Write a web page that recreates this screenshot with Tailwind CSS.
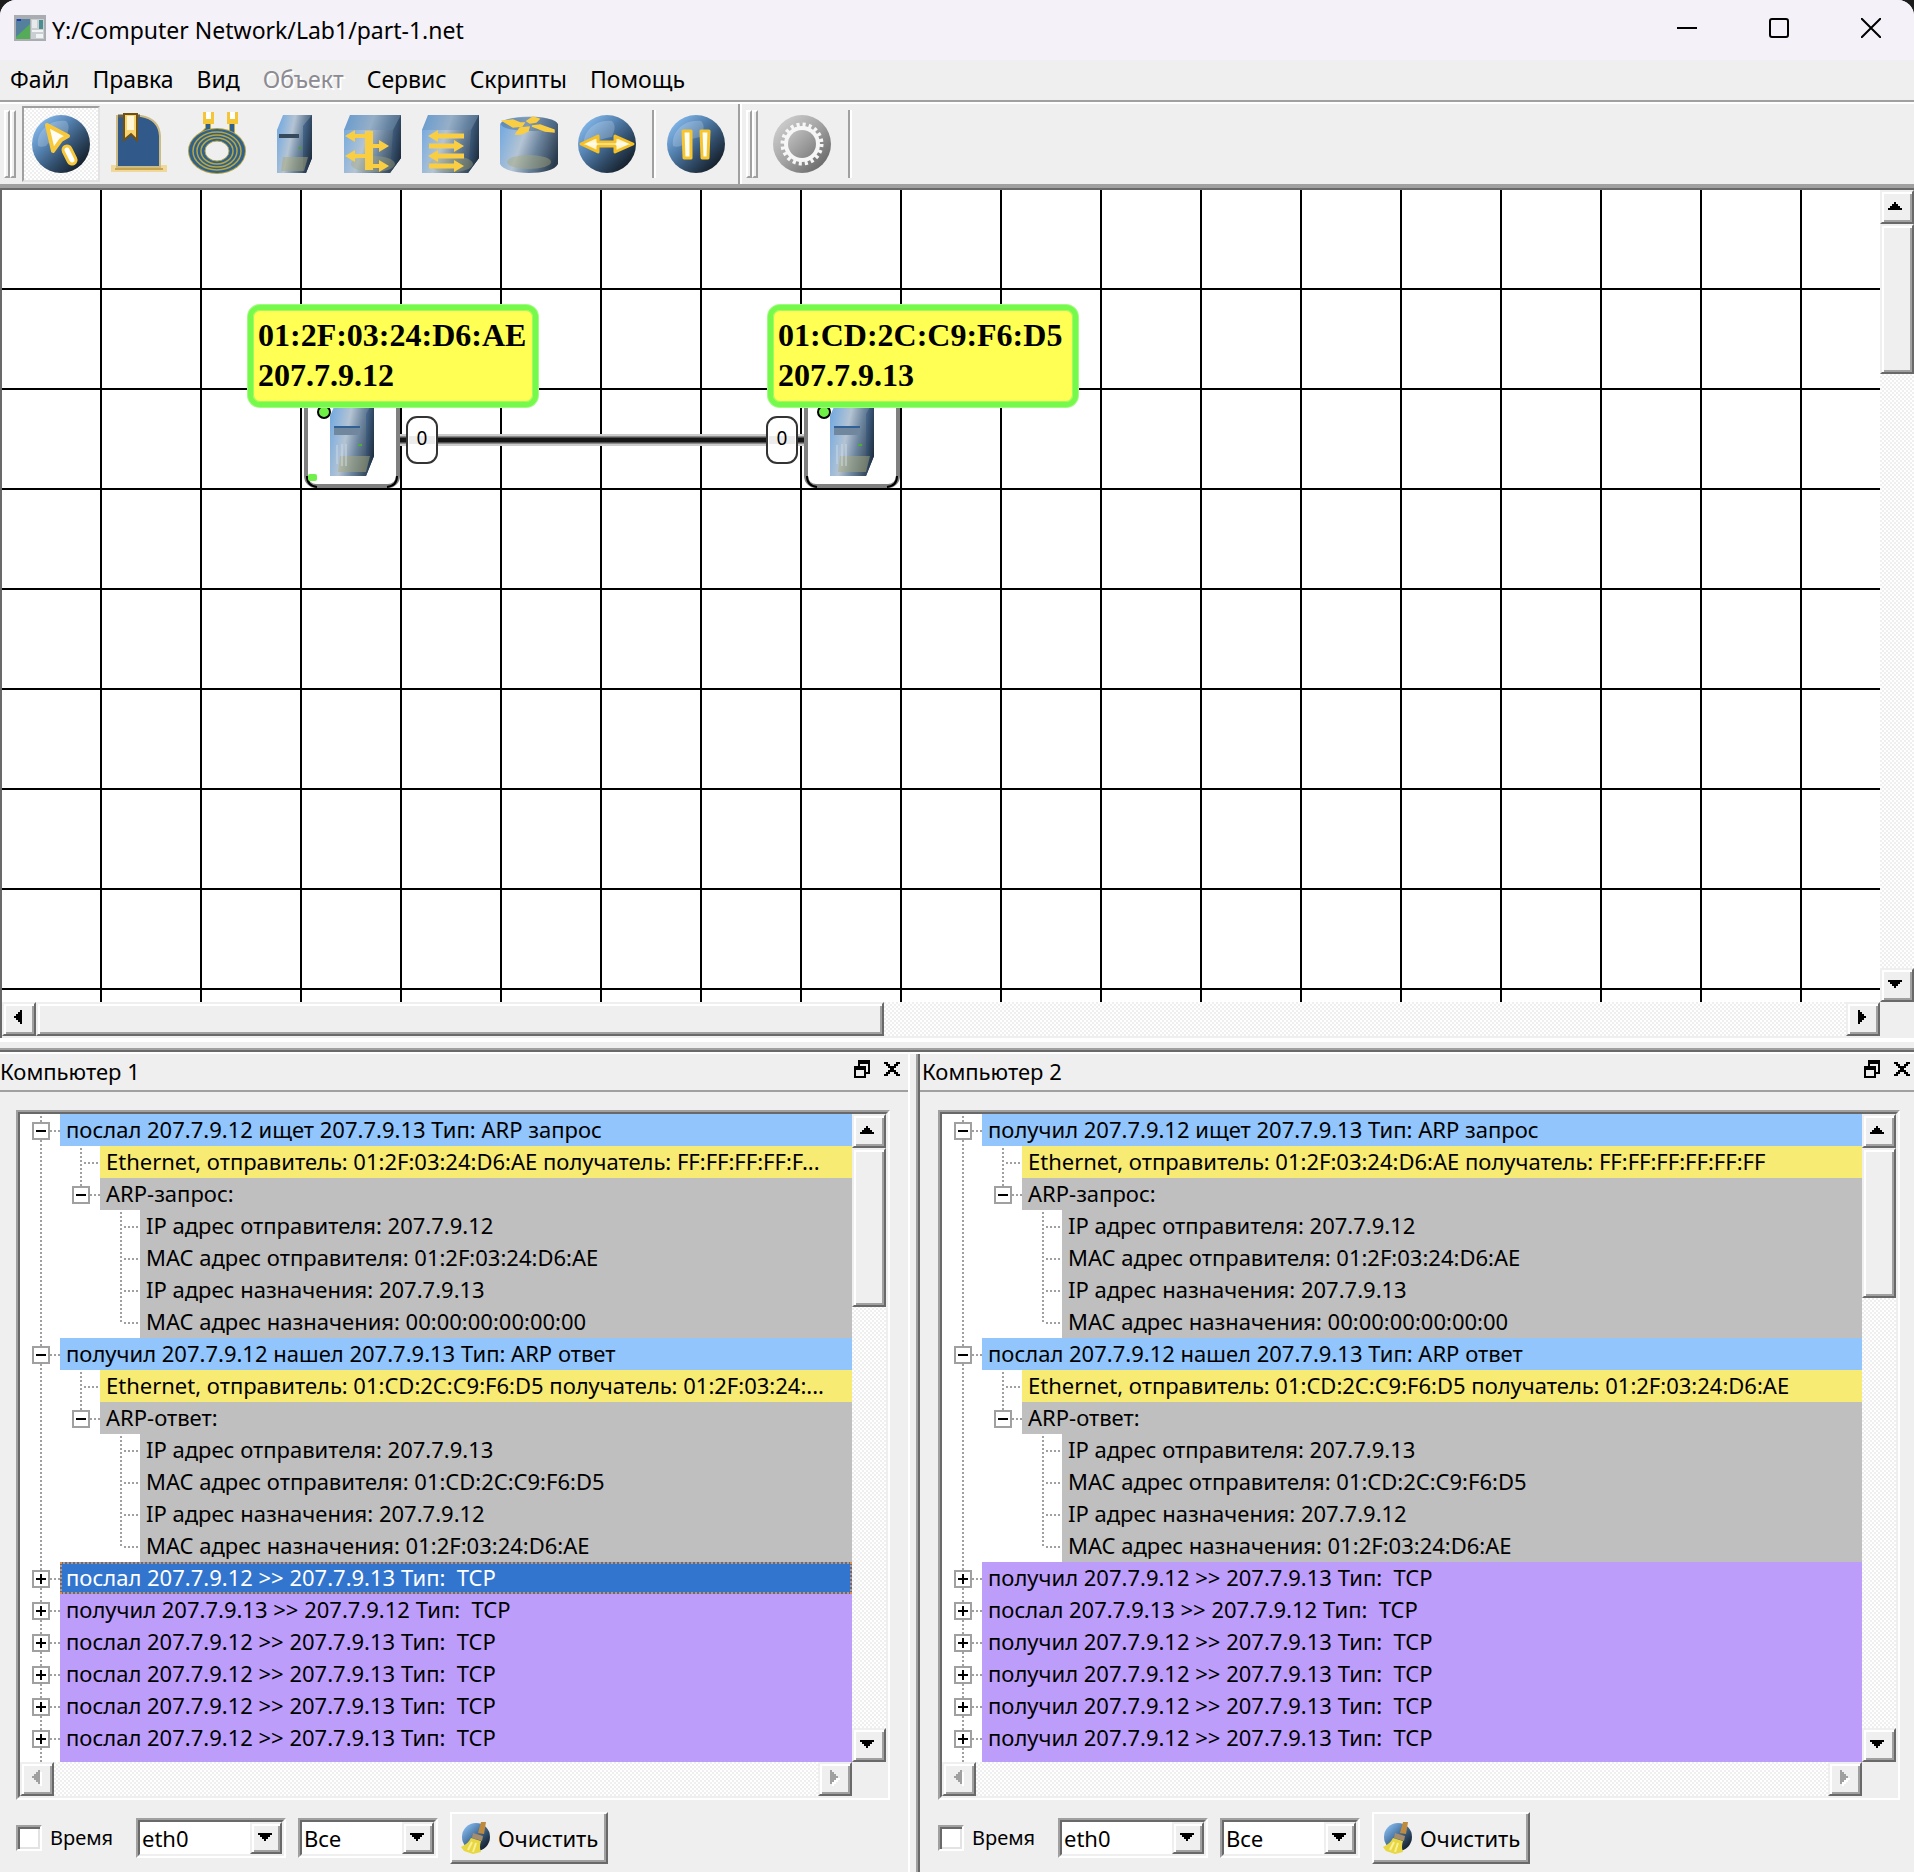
<!DOCTYPE html>
<html lang="ru">
<head>
<meta charset="utf-8">
<title>Y:/Computer Network/Lab1/part-1.net</title>
<script src="https://cdn.jsdelivr.net/npm/@tailwindcss/browser@4"></script>
</head>
<body class="bg-[#1c1c1c] font-['Noto_Sans','Open_Sans',sans-serif] text-[22px] leading-8 text-black">

<svg class="absolute size-0" aria-hidden="true">
  <defs>
    <linearGradient id="ball" x1="0.1" y1="0.1" x2="0.88" y2="0.88">
      <stop offset="0" stop-color="#86bbee"/><stop offset="0.35" stop-color="#5583b2"/><stop offset="0.65" stop-color="#33506e"/><stop offset="1" stop-color="#131c26"/>
    </linearGradient>
    <linearGradient id="grayball" x1="0.1" y1="0.1" x2="0.9" y2="0.9">
      <stop offset="0" stop-color="#cfcfcf"/><stop offset="0.5" stop-color="#a2a2a2"/><stop offset="1" stop-color="#666"/>
    </linearGradient>
    <linearGradient id="graycore" x1="0" y1="0" x2="1" y2="1">
      <stop offset="0" stop-color="#c4c4c4"/><stop offset="1" stop-color="#7d7d7d"/>
    </linearGradient>
    <linearGradient id="body" x1="0" y1="0.3" x2="1" y2="0.65">
      <stop offset="0" stop-color="#78abdf"/><stop offset="0.38" stop-color="#b4c4d4"/><stop offset="0.65" stop-color="#6b849d"/><stop offset="1" stop-color="#2a3b4e"/>
    </linearGradient>
    <linearGradient id="side" x1="0" y1="0" x2="1" y2="1">
      <stop offset="0" stop-color="#4d729c"/><stop offset="1" stop-color="#17222e"/>
    </linearGradient>
    <linearGradient id="gold" x1="0" y1="0" x2="0" y2="1">
      <stop offset="0" stop-color="#ffe9a0"/><stop offset="0.5" stop-color="#fffbe8"/><stop offset="1" stop-color="#ffe9a0"/>
    </linearGradient>
    <symbol id="sphere" viewBox="0 0 64 64">
      <circle cx="32" cy="32" r="29" fill="url(#ball)"/>
      <path d="M9 34C7 20 20 7 37 9c4 4 3 9 0 16-9 1-17 4-20 9-3 1-6 1-8 0z" fill="#fff" opacity=".2"/>
    </symbol>
    <symbol id="cube" viewBox="0 0 64 64">
      <path d="M3 18 9 3h51v43L49 61H3z" fill="url(#body)"/>
      <path d="M3 18 9 3h51L52 18z" fill="#5f87b0" opacity=".35"/>
      <path d="M52 18 60 3v43L49 61z" fill="url(#side)"/>
      <ellipse cx="32" cy="52" rx="22" ry="8" fill="#a8a878" opacity=".4"/>
    </symbol>
    <symbol id="tower" viewBox="0 0 44 76">
      <path d="M0 16 7 0h37v56l-8 20H0z" fill="url(#body)"/>
      <path d="M36 14 44 0v56l-8 20z" fill="url(#side)"/>
      <path d="M10 56h30l-4 16H8z" fill="#a8a878" opacity=".5"/>
      <path d="M4 27h26v8H4z" fill="#71879d"/><path d="M4 26h26v2H4z" fill="#2f6096"/>
      <path d="M7 45v19M12 44v22M16 44v22" stroke="#cbd8e6" stroke-width="1"/>
      <path d="M28 44h4v2h-4z" fill="#4fae35"/>
    </symbol>
    <g id="host">
      <rect x="2" y="2" width="92" height="92" rx="10" fill="#fff" stroke="#808080" stroke-width="4"/>
      <path d="M3 84q0 10 10 11M93 84q0 10-10 11" fill="none" stroke="#000" stroke-width="2"/>
      <circle cx="20" cy="20" r="6" fill="#6fef45" stroke="#000" stroke-width="2"/>
      <use href="#tower" x="26" y="8" width="44" height="76"/>
    </g>
  </defs>
</svg>

<div class="flex h-screen flex-col overflow-hidden rounded-t-2xl bg-[#efefef]">

  <header class="flex h-[60px] shrink-0 items-center bg-[#f4f1f8] pl-3.5 pb-1">
    <svg class="h-[26px] w-8" viewBox="0 0 32 26" aria-hidden="true">
      <rect width="32" height="26" fill="#a9adb2"/><path d="M2 4h14v20H2z" fill="#4b86a0"/><path d="M2 4h14v8L2 20z" fill="#54809e"/><path d="M2 22 16 9v15H2z" fill="#55ab58"/><path d="M3 4h4v2H3z" fill="#1c3cb4"/>
      <path d="M17 4h13v20H17z" fill="#c9ced3"/><path d="M18 5h5v8h-5z" fill="#e7eaec"/><path d="M25 5h4v9h-4z" fill="#4c8d8f"/><path d="M18 15h11v2H18zM22 19h7v4h-7z" fill="#f1f3f3"/>
    </svg>
    <h1 class="ml-1.5 flex-1 pt-1 text-[23px]">Y:/Computer Network/Lab1/part-1.net</h1>
    <div class="-mr-[3px] flex">
      <button class="flex h-12 w-[92px] items-center justify-center" aria-label="Свернуть"><svg width="20" height="20"><path d="M0 10h20" stroke="#000" stroke-width="2"/></svg></button>
      <button class="flex h-12 w-[92px] items-center justify-center" aria-label="Развернуть"><svg width="20" height="20"><rect x="1" y="1" width="18" height="18" rx="2" fill="none" stroke="#000" stroke-width="2"/></svg></button>
      <button class="flex h-12 w-[92px] items-center justify-center" aria-label="Закрыть"><svg width="20" height="20"><path d="M0 0 20 20M20 0 0 20" stroke="#000" stroke-width="2"/></svg></button>
    </div>
  </header>

  <nav class="flex h-10 shrink-0 items-center gap-[23px] pb-0.5 pl-2.5 text-[23px]">
    <button>Файл</button><button>Правка</button><button>Вид</button><button disabled class="text-[#8c8a92] [text-shadow:2px_2px_#fff]">Объект</button><button>Сервис</button><button>Скрипты</button><button>Помощь</button>
  </nav>

  <div class="flex h-[90px] shrink-0 border-t-2 border-b-2 border-t-[#a0a0a0] border-b-[#696969]">
    <div class="flex flex-1 border-t-2 border-b-4 border-t-white border-b-[#a0a0a0]" role="toolbar">
      <div class="flex items-center border-r-2 border-[#a0a0a0] pl-1 pr-[3px]">
        <div class="mr-1.5 flex h-[68px] w-3"><i class="w-1.5 border-2 border-white border-r-[#a0a0a0] border-b-[#a0a0a0]"></i><i class="w-1.5 border-2 border-white border-r-[#a0a0a0] border-b-[#a0a0a0]"></i></div>
        <button aria-label="Выделение" class="flex h-[76px] w-[78px] items-center justify-center border-2 border-t-[#a0a0a0] border-l-[#a0a0a0] border-r-[#e3e3e3] border-b-[#e3e3e3] bg-[repeating-conic-gradient(#efefef_0_25%,#fff_0_50%)] bg-[length:4px_4px]">
          <svg class="size-16" viewBox="0 0 64 64"><use href="#sphere"/><path d="m38 38 5 10" stroke="#f7c83c" stroke-width="11" stroke-linecap="round"/><path d="M18 13 39 24 32 28 24 39z" fill="#fffdf2" stroke="#f7c83c" stroke-width="4" stroke-linejoin="round"/><path d="m38 38 5 10" stroke="#fff" stroke-width="5" stroke-linecap="round"/></svg>
        </button>
        <button aria-label="Надпись" class="flex h-[76px] w-[78px] items-center justify-center">
          <svg class="size-16" viewBox="0 0 64 64"><path d="M4 53h56v7H4z" fill="#f0d79a"/><path d="M8 56h48v2H8z" fill="#c7a550"/><path d="M10 4h24q18 3 19 20v31H10z" fill="#31598a" stroke="#cdbb84" stroke-width="2"/><path d="M11 4h22" stroke="#6b604a" stroke-width="3"/><path d="M17 2h13v26l-6-6-7 6z" fill="#f7d470" stroke="#6e5215" stroke-width="2"/><path d="M20 4h7v14h-7z" fill="#fff6d6"/></svg>
        </button>
        <button aria-label="Кабель" class="flex h-[76px] w-[78px] items-center justify-center">
          <svg class="size-16" viewBox="0 0 64 64"><path d="M23 12v5L9 31M47 12v14" fill="none" stroke="#c6ac3e" stroke-width="6"/><path d="M23 12v5L9 31M47 12v14" fill="none" stroke="#2f618f" stroke-width="4"/>
            <g fill="#b3a03c"><ellipse cx="32" cy="39" rx="29" ry="23"/></g><ellipse cx="32" cy="39" rx="28" ry="22" fill="#2f618f"/>
            <g fill="none" stroke="#b9a63f" stroke-width="1.500"><ellipse cx="32" cy="39" rx="24" ry="19"/><ellipse cx="32" cy="39" rx="20" ry="16"/><ellipse cx="32" cy="39" rx="16" ry="13"/></g>
            <ellipse cx="32" cy="39" rx="12" ry="10" fill="#efefef" stroke="#b9a63f" stroke-width="1"/>
            <path d="M18 0h11v12H18zM42 0h11v12H42z" fill="#f4c637"/><path d="M21 0h5v7h-5zM45 0h5v7h-5z" fill="#fff"/></svg>
        </button>
        <button aria-label="Компьютер" class="flex h-[76px] w-[78px] items-center justify-center">
          <svg class="size-16" viewBox="0 0 64 64"><path d="M14 18 20 3h29v43l-6 15H14z" fill="url(#body)"/><path d="M40 14 49 3v43l-6 15h-3z" fill="url(#side)"/><path d="M20 45h25l-4 14H18z" fill="#a8a878" opacity=".5"/><path d="M16 22h20v4H16z" fill="#37495c"/><circle cx="37" cy="36" r="1.500" fill="#4d9b3a"/></svg>
        </button>
        <button aria-label="Коммутатор" class="flex h-[76px] w-[78px] items-center justify-center">
          <svg class="size-16" viewBox="0 0 64 64"><use href="#cube"/><path d="M12 24h18M12 44h18M27 34h14M27 54h14" stroke="#f9ce43" stroke-width="4"/><path d="M28 19v39" stroke="#f9ce43" stroke-width="8"/><path d="M14 18v12L4 24zM14 38v12L4 44zM38 28v12l10-6zM38 48v12l10-6z" fill="#f9ce43"/></svg>
        </button>
        <button aria-label="Концентратор" class="flex h-[76px] w-[78px] items-center justify-center">
          <svg class="size-16" viewBox="0 0 64 64"><use href="#cube"/><path d="M16 24h29M10 34h26M16 44h29M10 54h26" stroke="#f9ce43" stroke-width="5"/><path d="M19 18v12L9 24zM35 28v12l10-6zM19 38v12L9 44zM35 48v12l10-6z" fill="#f9ce43"/></svg>
        </button>
        <button aria-label="Маршрутизатор" class="flex h-[76px] w-[78px] items-center justify-center">
          <svg class="size-16" viewBox="0 0 64 64"><path d="M3 12C8 2 56 2 61 12v40C56 64 8 64 3 52z" fill="url(#body)"/><ellipse cx="32" cy="12" rx="28" ry="7" fill="#44688f" opacity=".45"/><ellipse cx="32" cy="50" rx="22" ry="7" fill="#a8a878" opacity=".45"/><path d="m6 9 10-1 7 3h4l-2 3-9 1zM30 9l6-4 6 2-3 3-6 1zM35 14l8-1 14 5v2l-9-1zM19 22l4-6 9-1-1 4-7 3z" fill="#f9ce43" stroke="#f9ce43" stroke-width="1.500"/></svg>
        </button>
        <button aria-label="Общая шина" class="flex h-[76px] w-[78px] items-center justify-center">
          <svg class="size-16" viewBox="0 0 64 64"><use href="#sphere"/><path d="M6 32 23 24v6h17v-6l18 8-18 8v-6H23v6z" fill="url(#gold)" stroke="#f5c126" stroke-width="3" stroke-linejoin="round"/></svg>
        </button>
        <i class="ml-1.5 mr-px h-[68px] w-1 border-l-2 border-r-2 border-l-[#a0a0a0] border-r-white"></i>
        <button aria-label="Пауза" class="flex h-[76px] w-[78px] items-center justify-center">
          <svg class="size-16" viewBox="0 0 64 64"><use href="#sphere"/><path d="M19 19h8v27h-7zM37 19h8l-1 27h-6z" fill="#fffdf0" stroke="#f6c530" stroke-width="3" stroke-linejoin="round"/></svg>
        </button>
      </div>
      <div class="flex items-center border-l-2 border-white pl-1">
        <div class="mr-[5px] flex h-[68px] w-3"><i class="w-1.5 border-2 border-white border-r-[#a0a0a0] border-b-[#a0a0a0]"></i><i class="w-1.5 border-2 border-white border-r-[#a0a0a0] border-b-[#a0a0a0]"></i></div>
        <button aria-label="Настройки" disabled class="flex h-[76px] w-[78px] items-center justify-center">
          <svg class="size-16" viewBox="0 0 64 64"><circle cx="32" cy="32" r="29" fill="url(#grayball)"/><circle cx="32" cy="32" r="15.500" fill="none" stroke="#f6f6f6" stroke-width="5"/><circle cx="32" cy="32" r="19" fill="none" stroke="#f6f6f6" stroke-width="5" stroke-dasharray="3 2.970"/><circle cx="32" cy="32" r="14" fill="url(#graycore)"/></svg>
        </button>
        <i class="ml-[7px] h-[68px] w-1 border-l-2 border-r-2 border-l-[#a0a0a0] border-r-white"></i>
      </div>
    </div>
  </div>

  <main class="grid min-h-0 flex-[846] grid-cols-[1fr_34px] grid-rows-[1fr_34px] border-l-2 border-l-[#696969] pb-0.5">
    <div class="relative overflow-hidden bg-white bg-[linear-gradient(to_right,transparent_98px,#000_98px),linear-gradient(transparent_98px,#000_98px)] bg-[length:100px_100px]">
      <svg class="absolute inset-0 h-full w-full" aria-hidden="true">
        <path d="M398 250h408" stroke="#cbcbcb" stroke-width="12"/><path d="M398 250h408" stroke="#8a8a8a" stroke-width="8"/><path d="M398 250h408" stroke="#161616" stroke-width="5"/>
        <use href="#host" x="302" y="202"/><use href="#host" x="802" y="202"/>
        <rect x="306" y="284" width="9" height="7" rx="2" fill="#6ff04a"/>
        <rect x="405" y="227" width="30" height="46" rx="10" fill="#fff" stroke="#333" stroke-width="2"/>
        <rect x="765" y="227" width="30" height="46" rx="10" fill="#fff" stroke="#333" stroke-width="2"/>
        <path d="M407 246h26v8h-26zM767 246h26v8h-26z" fill="#ececec"/>
        <g font-size="19" text-anchor="middle"><text x="420" y="255">0</text><text x="780" y="255">0</text></g>
      </svg>
      <div class="absolute left-[246px] top-[115px] h-[102px] w-[290px] whitespace-nowrap rounded-xl border-[5px] border-[#75fa4b] bg-[#ffff54] p-[5px] font-['Liberation_Serif',serif] text-[32px] font-bold leading-10 shadow-[0_0_0_1px_#a0fb80,inset_0_0_0_1px_#a0fb60]">01:2F:03:24:D6:AE<br>207.7.9.12</div>
      <div class="absolute left-[766px] top-[115px] h-[102px] w-[310px] whitespace-nowrap rounded-xl border-[5px] border-[#75fa4b] bg-[#ffff54] p-[5px] font-['Liberation_Serif',serif] text-[32px] font-bold leading-10 shadow-[0_0_0_1px_#a0fb80,inset_0_0_0_1px_#a0fb60]">01:CD:2C:C9:F6:D5<br>207.7.9.13</div>
    </div>
    <div data-bar="v" data-size="150"></div>
    <div data-bar="h" data-size="848"></div>
    <div></div>
  </main>

  <div class="h-4 shrink-0 border-t-4 border-b-2 border-white"><div class="h-full border-b-2 border-[#696969] pb-0"><div class="h-full border-b-2 border-[#a0a0a0]"></div></div></div>

  <div class="flex min-h-0 flex-[818]">
    <section class="flex min-w-0 flex-[908] flex-col border-r-2 border-white" data-dock="0"></section>
    <div class="w-2.5 shrink-0 border-r-2 border-[#696969]"><div class="h-full border-r-2 border-[#a0a0a0]"></div></div>
    <section class="flex min-w-0 flex-[994] flex-col" data-dock="1"></section>
  </div>
</div>

<script>
const arrows = {up:'M3 0h1v1h1v1h1v1h1v1H0V3h1V2h1V1h1z', down:'M0 0h7v1H6v1H5v1H4v1H3V3H2V2H1V1H0z', left:'M4 0v7H3V6H2V5H1V4H0V3h1V2h1V1h1V0z', right:'M0 0v7h1V6h1V5h1V4h1V3H3V2H2V1H1V0z'};
const names = {up:'Вверх', down:'Вниз', left:'Влево', right:'Вправо'};
const nudge = {up:'pr-1 pb-0.5', down:'pr-1 pb-0.5', left:'pr-0.5 pb-1', right:'pr-0.5 pb-1'};
const bevel = 'border-2 border-t-[#efefef] border-l-[#efefef] border-r-[#696969] border-b-[#696969] bg-[#efefef] shadow-[inset_2px_2px_#fff,inset_-2px_-2px_#a0a0a0]';
const arrow = (d, off) => {
  const vert = d === 'up' || d === 'down', w = vert ? 14 : 8, h = vert ? 8 : 14;
  return `<svg width="${w}" height="${h}" viewBox="0 0 ${w/2} ${h/2}" class="overflow-visible" shape-rendering="crispEdges">${off ? `<path d="${arrows[d]}" fill="#fff" transform="translate(1 1)"/>` : ''}<path d="${arrows[d]}" fill="${off ? '#a0a0a0' : '#000'}"/></svg>`;
};
const btn = (d, off) => `<button aria-label="${names[d]}" ${off ? 'disabled' : ''} class="flex size-[34px] shrink-0 items-center justify-center ${nudge[d]} ${bevel}">${arrow(d, off)}</button>`;
const track = 'bg-[repeating-conic-gradient(#efefef_0_25%,#fff_0_50%)] bg-[length:4px_4px]';
const bar = (dir, size) => dir === 'v'
  ? `<div class="flex h-full flex-col ${track}">${btn('up')}<div class="${bevel}" style="height:${size}px"></div><div class="flex-1"></div>${btn('down')}</div>`
  : `<div class="flex h-full ${track}">${btn('left', !size)}${size ? `<div class="${bevel}" style="width:${size}px"></div>` : ''}<div class="flex-1"></div>${btn('right', !size)}</div>`;
document.querySelectorAll('[data-bar]').forEach(e => e.innerHTML = bar(e.dataset.bar, +e.dataset.size));

/* Branch cells: v = line through, t = tee, l = last child, m/n = open box (line through / ends here), p = closed box */
const line = d => `<path d="${d}" stroke="#a0a0a0" stroke-width="2" stroke-dasharray="2 2"/>`;
const box = plus => `<rect x="13" y="9" width="16" height="16" fill="#fff" stroke="#a0a0a0" stroke-width="2"/><path d="M16 17h10${plus ? 'M21 12v10' : ''}" stroke="#000" stroke-width="2"/>`;
const cells = {
  v: line('M21 2v32'), e: '', t: line('M21 2v32') + line('M24 17h16'), l: line('M21 2v16') + line('M24 17h16'),
  m: line('M21 2v32') + line('M30 17h10') + box(0), n: line('M21 2v10') + line('M30 17h10') + box(0), p: line('M21 2v32') + line('M30 17h10') + box(1)
};
const tint = {b:'bg-[#91c5fb]', y:'bg-[#f8eb74]', g:'bg-[#bfbfbf]', p:'bg-[#bd9dfa]', s:'bg-[#3275cf] text-white outline-2 -outline-offset-2 outline-dotted outline-[#e08e48]'};
const row = ([c, k, t]) => `<li role="treeitem" class="flex h-8 shrink-0">${[...c].map(x => `<svg width="40" height="32" class="shrink-0">${cells[x]}</svg>`).join('')}<span class="min-w-0 flex-1 overflow-hidden whitespace-pre pl-1.5 leading-[30px] ${tint[k]}">${t}</span></li>`;
const tcp = (verb, a, b, k) => ['p', k || 'p', `${verb} 207.7.9.${a} &gt;&gt; 207.7.9.${b} Тип:  TCP`];
const arp = (head, eth, name, ips, macs) => [
  ['m','b',head], ['vt','y',eth], ['vn','g',name],
  ['vet','g',`IP адрес отправителя: ${ips[0]}`], ['vet','g',`MAC адрес отправителя: ${macs[0]}`],
  ['vet','g',`IP адрес назначения: ${ips[1]}`], ['vel','g',`MAC адрес назначения: ${macs[1]}`]];
const A = '01:2F:03:24:D6:AE', B = '01:CD:2C:C9:F6:D5', i12 = '207.7.9.12', i13 = '207.7.9.13';
const build = (v1, v2, e1, e2, v3, v4, v5) => [
  ...arp(`${v1} ${i12} ищет ${i13} Тип: ARP запрос`, `Ethernet, отправитель: ${A} получатель: ${e1}`, 'ARP-запрос:', [i12, i13], [A, '00:00:00:00:00:00']),
  ...arp(`${v2} ${i12} нашел ${i13} Тип: ARP ответ`, `Ethernet, отправитель: ${B} получатель: ${e2}`, 'ARP-ответ:', [i13, i12], [B, A]),
  tcp(v3, 12, 13, v5), tcp(v4, 13, 12), ...Array.from({length: 5}, () => tcp(v3, 12, 13))];
const docks = [
  {title:'Компьютер 1', head:'pr-2', pad:'pl-4 pr-[18px]', thumb:159, rows:build('послал', 'получил', 'FF:FF:FF:FF:F...', '01:2F:03:24:...', 'послал', 'получил', 's')},
  {title:'Компьютер 2', head:'pl-0.5 pr-1', pad:'pl-[18px] pr-3.5', thumb:150, rows:build('получил', 'послал', 'FF:FF:FF:FF:FF:FF', A, 'получил', 'послал')}
];
const combo = (v, label, w) => `<div class="relative h-10 ${w} border-2 border-t-[#a0a0a0] border-l-[#a0a0a0] border-r-white border-b-white">
  <select aria-label="${label}" class="h-full w-full appearance-none border-2 border-t-[#696969] border-l-[#696969] border-r-[#efefef] border-b-[#efefef] bg-white pl-0.5 leading-7"><option>${v}</option></select>
  <span class="pointer-events-none absolute right-0.5 top-0.5 flex size-8 items-center justify-center pr-0.5 pb-0.5 ${bevel}">${arrow('down')}</span></div>`;
docks.forEach((d, n) => {
  document.querySelector(`[data-dock="${n}"]`).innerHTML = `
  <div class="flex h-[38px] shrink-0 items-center border-b-2 border-[#a0a0a0] ${d.head}">
    <h2 class="flex-1 pb-0.5">${d.title}</h2>
    <button aria-label="Открепить" class="mr-3.5 -mt-1.5"><svg width="16" height="18" viewBox="0 0 8 9" shape-rendering="crispEdges"><path d="M2 0h6v7H6V6h1V2H3v1H2zM0 3h6v6H0zM1 5v3h4V5z" fill-rule="evenodd"/></svg></button>
    <button aria-label="Закрыть панель" class="-mt-1.5"><svg width="16" height="14" viewBox="0 0 8 7" shape-rendering="crispEdges"><path d="M0 0h2v1h1v1h2V1h1V0h2v1H7v1H6v1H5v1h1v1h1v1h1v1H6V6H5V5H3v1H2v1H0V6h1V5h1V4h1V3H2V2H1V1H0z"/></svg></button>
  </div>
  <div class="flex min-h-0 flex-1 flex-col pt-[18px] ${d.pad}">
    <div class="min-h-0 flex-1 border-2 border-t-[#a0a0a0] border-l-[#a0a0a0] border-r-white border-b-white">
      <div class="grid h-full grid-cols-[1fr_34px] grid-rows-[1fr_34px] border-2 border-t-[#696969] border-l-[#696969] border-r-[#efefef] border-b-[#efefef]">
        <ul role="tree" aria-label="${d.title}" class="flex min-h-0 min-w-0 flex-col overflow-hidden bg-white">${d.rows.map(row).join('')}</ul>
        ${bar('v', d.thumb)}${bar('h', 0)}<div></div>
      </div>
    </div>
    <form class="flex h-[72px] shrink-0 items-start pt-3"><div class="flex h-[52px] items-center">
      <label class="flex w-[120px] items-center gap-2 text-xl leading-8"><input type="checkbox" class="size-[26px] appearance-none border-2 border-t-[#a0a0a0] border-l-[#a0a0a0] border-r-white border-b-white bg-white shadow-[inset_2px_2px_#696969,inset_-2px_-2px_#e3e3e3]">Время</label>
      ${combo('eth0', 'Интерфейс', 'w-[150px]')}<div class="w-3"></div>${combo('Все', 'Тип пакетов', 'w-[140px]')}
      <button type="button" class="ml-3 flex h-[52px] w-[158px] items-center gap-1.5 border-2 border-t-white border-l-white border-r-[#696969] border-b-[#696969] pl-2 shadow-[inset_-2px_-2px_#a0a0a0]">
        <svg class="size-8 shrink-0" viewBox="0 0 32 32"><circle cx="16" cy="15" r="14" fill="url(#ball)"/><path d="M21 0h5l-2 12-6-1z" fill="#c08a3e"/><path d="M13 11l10 3-1 5-10-3z" fill="#a58c6c"/><path d="M11 16l10 3q-2 6 0 11l-8 2-9-3-3-4q7-3 10-9z" fill="#e8d743"/><path d="M12 20l-4 8M16 21l-3 9" stroke="#f8f096" stroke-width="2"/></svg>Очистить</button>
    </div></form>
  </div>`;
});
</script>
</body>
</html>
